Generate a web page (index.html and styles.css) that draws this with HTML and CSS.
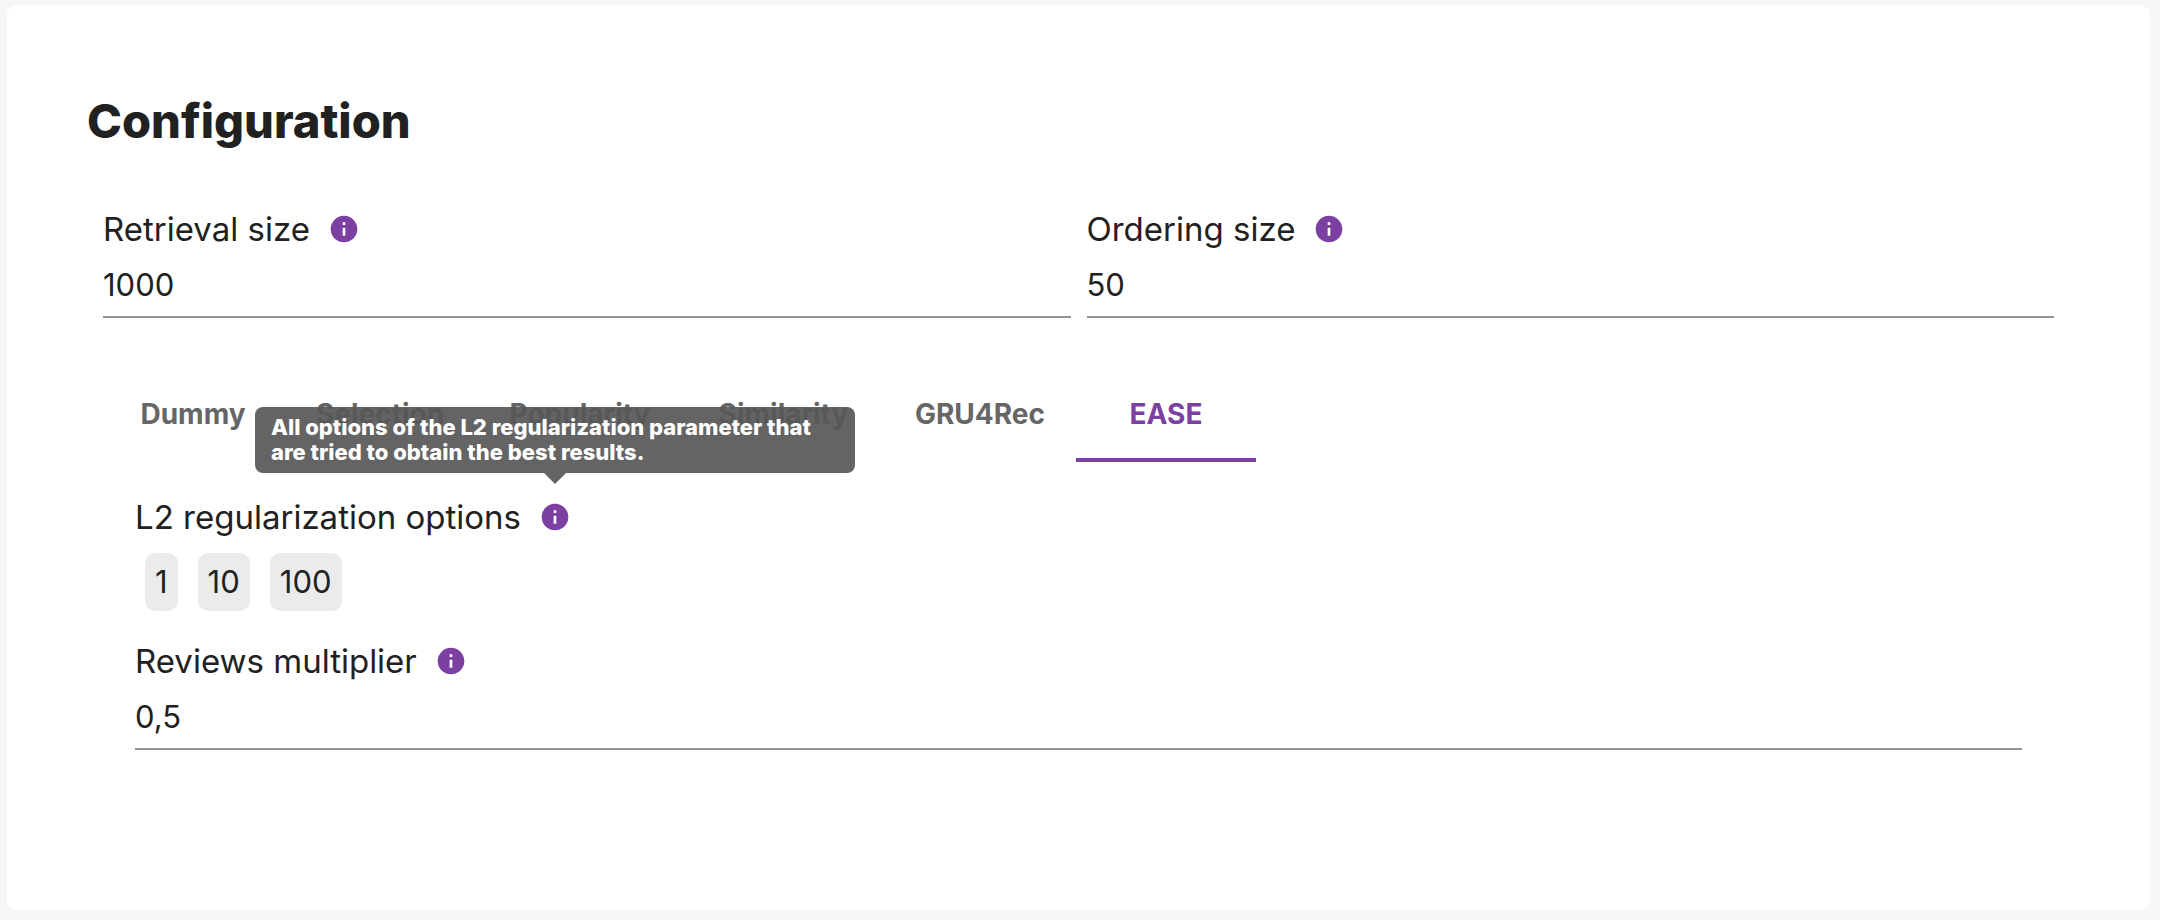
FILE: index.html
```html
<!DOCTYPE html>
<html lang="en">
<head>
  <meta charset="utf-8">
  <meta name="viewport" content="width=device-width, initial-scale=1">
  <title>Configuration</title>
  <link rel="stylesheet" href="styles.css">
</head>
<body>
  <svg class="sprite" aria-hidden="true">
    <symbol id="icon-info" viewBox="0 0 24 24">
      <path d="M12 2C6.48 2 2 6.48 2 12s4.48 10 10 10 10-4.48 10-10S17.52 2 12 2zm1 15h-2v-6h2v6zm0-8h-2V7h2v2z"/>
    </symbol>
  </svg>

  <main class="card">
    <h1 class="title">Configuration</h1>

    <div class="content">
      <div class="fields">
        <div class="field">
          <div class="field-head">
            <label for="retrieval">Retrieval size</label>
            <button class="info" type="button" aria-label="About retrieval size"><svg class="info-icon"><use href="#icon-info"/></svg></button>
          </div>
          <input class="input" id="retrieval" type="text" inputmode="numeric" value="1000">
        </div>
        <div class="field">
          <div class="field-head">
            <label for="ordering">Ordering size</label>
            <button class="info" type="button" aria-label="About ordering size"><svg class="info-icon"><use href="#icon-info"/></svg></button>
          </div>
          <input class="input" id="ordering" type="text" inputmode="numeric" value="50">
        </div>
      </div>

      <div class="tabs" role="tablist" aria-label="Algorithms">
        <button class="tab" type="button" role="tab" aria-selected="false">Dummy</button>
        <button class="tab" type="button" role="tab" aria-selected="false">Selection</button>
        <button class="tab" type="button" role="tab" aria-selected="false">Popularity</button>
        <button class="tab" type="button" role="tab" aria-selected="false">Similarity</button>
        <button class="tab" type="button" role="tab" aria-selected="false">GRU4Rec</button>
        <button class="tab tab-active" type="button" role="tab" id="tab-ease" aria-selected="true" aria-controls="panel-ease">EASE</button>
      </div>

      <section class="panel" role="tabpanel" id="panel-ease" aria-labelledby="tab-ease">
        <div class="option-group" role="group" aria-labelledby="l2-label">
          <div class="field-head">
            <span id="l2-label">L2 regularization options</span>
            <button class="info" type="button" aria-label="About L2 regularization options" aria-describedby="l2-tip">
              <svg class="info-icon"><use href="#icon-info"/></svg>
              <span class="tooltip" role="tooltip" id="l2-tip">All options of the L2 regularization parameter that are tried to obtain the best results.</span>
            </button>
          </div>
          <div class="chips">
            <span class="chip">1</span>
            <span class="chip">10</span>
            <span class="chip">100</span>
          </div>
        </div>

        <div class="field">
          <div class="field-head">
            <label for="multiplier">Reviews multiplier</label>
            <button class="info" type="button" aria-label="About reviews multiplier"><svg class="info-icon"><use href="#icon-info"/></svg></button>
          </div>
          <input class="input" id="multiplier" type="text" inputmode="decimal" value="0,5">
        </div>
      </section>
    </div>
  </main>
</body>
</html>
```
FILE: styles.css
```css
:root {
  --text: #212121;
  --muted: #666666;
  --accent: #7c3fa2;
}

* {
  box-sizing: border-box;
}

body {
  margin: 0;
  padding: 6px 10px 10px 7px;
  background: #f6f7f9;
  color: var(--text);
  font-family: "Inter", "Liberation Sans", sans-serif;
}

button,
input {
  margin: 0;
  padding: 0;
  border: 0;
  background: none;
  color: inherit;
  font: inherit;
}

button {
  cursor: pointer;
}

.sprite {
  display: none;
}

.card {
  padding: 87px 80px 160px;
  border-radius: 8px;
  background: #ffffff;
}

.title {
  margin: 0 0 56px;
  font-size: 47px;
  font-weight: 800;
  line-height: 56px;
}

.content {
  padding: 0 16px;
}

.fields {
  display: grid;
  grid-template-columns: 1fr 1fr;
  gap: 16px;
}

.field-head {
  display: flex;
  align-items: center;
  gap: 18px;
  font-size: 33px;
  line-height: 48px;
}

.info {
  position: relative;
  width: 32px;
  height: 32px;
  color: var(--accent);
}

.info-icon {
  display: block;
  width: 32px;
  height: 32px;
  fill: currentColor;
}

.input {
  display: block;
  width: 100%;
  height: 65px;
  border-bottom: 2px solid #949494;
  border-radius: 0;
  font-size: 31px;
}

.tabs {
  display: grid;
  grid-template-columns: 180px 194px 206px 201px 192px 180px;
  margin-top: 48px;
}

.tab {
  height: 96px;
  color: var(--muted);
  font-size: 28px;
  font-weight: 700;
}

.tab-active {
  color: var(--accent);
  box-shadow: inset 0 -4px var(--accent);
}

.panel {
  display: flex;
  flex-direction: column;
  gap: 26px;
  padding: 31px 32px 0;
}

.chips {
  display: flex;
  gap: 20px;
  padding: 12px 10px 0;
}

.chip {
  padding: 0 10px;
  border-radius: 10px;
  background: #ebebeb;
  font-size: 31px;
  line-height: 58px;
}

.tooltip {
  position: absolute;
  bottom: calc(100% + 28px);
  left: 50%;
  width: 600px;
  padding: 8px 16px;
  border-radius: 8px;
  background: rgba(87, 87, 87, 0.92);
  color: #ffffff;
  font-size: 22px;
  font-weight: 800;
  line-height: 25px;
  text-align: left;
  transform: translateX(-50%);
}

.tooltip::after {
  content: "";
  position: absolute;
  top: 100%;
  left: 50%;
  margin-left: -11px;
  border: 11px solid transparent;
  border-top-color: rgba(87, 87, 87, 0.92);
  border-bottom: 0;
}
```
